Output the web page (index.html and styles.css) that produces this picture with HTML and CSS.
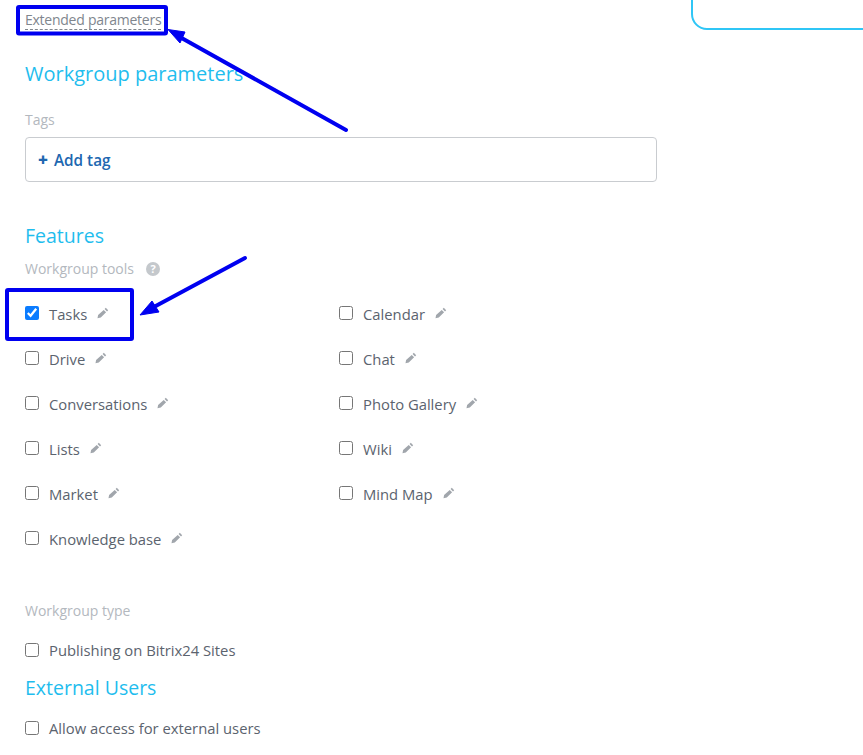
FILE: index.html
```html
<!DOCTYPE html>
<html lang="en">
<head>
<meta charset="utf-8">
<title>Extended parameters</title>
<link rel="stylesheet" href="styles.css">
</head>
<body>
<div class="page">
  <div class="corner-card"></div>
  <a class="toggle">Extended parameters</a>
  <h2 class="title first">Workgroup parameters</h2>
  <div class="label tags-label">Tags</div>
  <div class="tag-box"><span class="plus">+</span><span>Add tag</span></div>
  <h2 class="title features">Features</h2>
  <div class="label tools-label">Workgroup tools
    <svg class="help" viewBox="0 0 14 14" width="14" height="14"><circle cx="7" cy="7" r="7" fill="#c4c8cc"/><text x="7" y="10.6" text-anchor="middle" class="help-q">?</text></svg>
  </div>
  <svg width="0" height="0" class="defs"><defs><symbol id="pen" viewBox="0 0 12 12"><path d="M8.8.8l2.4 2.4-1.2 1.200-2.400-2.400zM6.700 2.900l2.400 2.400-5.300 5.300-3.300.6.6-3.300z" fill="#a1a6ac"/></symbol></defs></svg>
  <div class="tools">
    <div class="col col-a">
      <label class="row"><input type="checkbox" checked><span>Tasks</span><svg class="pen"><use href="#pen"/></svg></label>
      <label class="row"><input type="checkbox"><span>Drive</span><svg class="pen"><use href="#pen"/></svg></label>
      <label class="row"><input type="checkbox"><span>Conversations</span><svg class="pen"><use href="#pen"/></svg></label>
      <label class="row"><input type="checkbox"><span>Lists</span><svg class="pen"><use href="#pen"/></svg></label>
      <label class="row"><input type="checkbox"><span>Market</span><svg class="pen"><use href="#pen"/></svg></label>
      <label class="row"><input type="checkbox"><span>Knowledge base</span><svg class="pen"><use href="#pen"/></svg></label>
    </div>
    <div class="col">
      <label class="row"><input type="checkbox"><span>Calendar</span><svg class="pen"><use href="#pen"/></svg></label>
      <label class="row"><input type="checkbox"><span>Chat</span><svg class="pen"><use href="#pen"/></svg></label>
      <label class="row"><input type="checkbox"><span>Photo Gallery</span><svg class="pen"><use href="#pen"/></svg></label>
      <label class="row"><input type="checkbox"><span>Wiki</span><svg class="pen"><use href="#pen"/></svg></label>
      <label class="row"><input type="checkbox"><span>Mind Map</span><svg class="pen"><use href="#pen"/></svg></label>
    </div>
  </div>
  <div class="label type-label">Workgroup type</div>
  <label class="row single"><input type="checkbox"><span>Publishing on Bitrix24 Sites</span></label>
  <h2 class="title external">External Users</h2>
  <label class="row single access"><input type="checkbox"><span>Allow access for external users</span></label>

  <svg class="annotations" width="863" height="755" viewBox="0 0 863 755">
    <rect x="18" y="7" width="148" height="26.500" rx="1" fill="none" stroke="#0000f0" stroke-width="4"/>
    <rect x="7" y="290" width="125" height="49" rx="1" fill="none" stroke="#0000f0" stroke-width="4"/>
    <path d="M346 130L178 36" stroke="#0000f0" stroke-width="4" stroke-linecap="round" fill="none"/>
    <path d="M168 29.500L185 32L180 43Z" fill="#0000f0" stroke="#0000f0" stroke-linejoin="round"/>
    <path d="M245 258L152 308" stroke="#0000f0" stroke-width="4" stroke-linecap="round" fill="none"/>
    <path d="M140 315L152 301L159 312Z" fill="#0000f0" stroke="#0000f0" stroke-linejoin="round"/>
  </svg>
</div>
</body>
</html>
```
FILE: styles.css
```css
* { box-sizing: border-box; }
html, body { margin: 0; padding: 0; background: #fff; }
body { font-family: "Open Sans", sans-serif; color: #535c69; overflow: hidden; }
.page { position: relative; width: 863px; height: 755px; padding-left: 25px; overflow: hidden; }
.corner-card {
  position: absolute; left: 691px; top: -40px; width: 220px; height: 70px;
  border: 2px solid #2fc6f6; border-radius: 16px; background: #fff;
}
.toggle {
  display: block; width: max-content; margin-top: 10px; height: 20px; line-height: 19px;
  font-size: 14px; letter-spacing: -0.25px; color: #80868e; border-bottom: 1px dashed #80868e;
}
.title { margin: 0; font-weight: 400; font-size: 19.500px; line-height: 27px; color: #1fbdee; }
.first { margin-top: 30px; font-size: 20px; }
.label { font-size: 14px; line-height: 19px; color: #b3b8be; }
.tags-label { margin-top: 23px; }
.tag-box {
  display: flex; align-items: center; gap: 6px;
  width: 632px; height: 45px; margin-top: 8px; padding-left: 12px;
  border: 1px solid #c9ccd0; border-radius: 4px;
  font-size: 15.300px; font-weight: 600; color: #2067b0;
}
.plus { font-weight: 800; font-size: 17px; }
.features { margin-top: 40px; }
.tools-label { display: flex; align-items: center; gap: 12px; margin-top: 10px; }
.help { display: block; }
.help-q { font: 700 11px "Open Sans", sans-serif; fill: #fff; }
.defs { position: absolute; }
.tools { display: flex; margin-top: 13px; height: 292px; }
.col { display: flex; flex-direction: column; }
.col-a { width: 314px; }
.row { display: flex; align-items: center; height: 45px; font-size: 14.800px; color: #5b636e; flex: none; }
.row input { width: 14px; height: 14px; margin: -1px 10px 0 0; flex: none; accent-color: #0b7cff; }
.pen { width: 12px; height: 12px; margin-left: 10px; margin-top: -2px; }
.type-label { margin-top: 18px; }
.single { height: 22px; margin-top: 19px; }
.external { margin-top: 13px; }
.access { margin-top: 16px; }
.annotations { position: absolute; left: 0; top: 0; pointer-events: none; }
```
